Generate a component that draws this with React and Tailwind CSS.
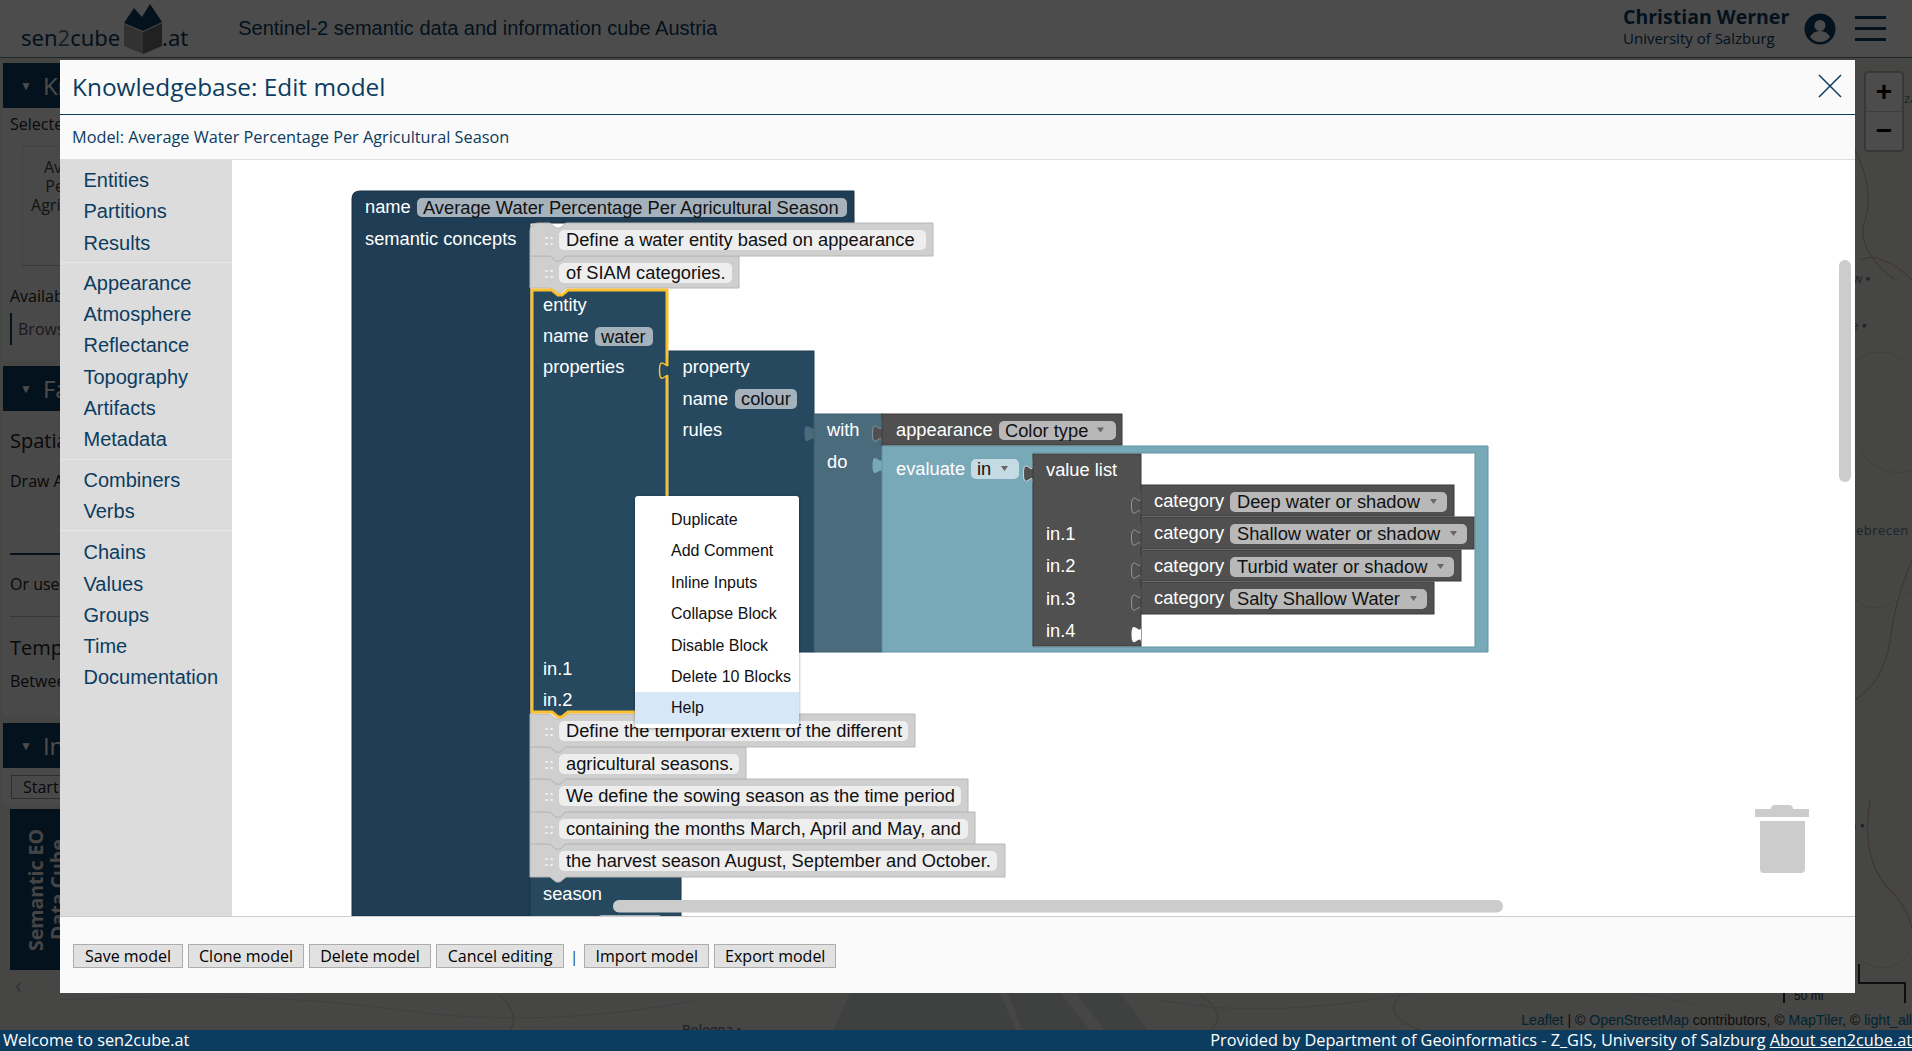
import React from "react";

const NOTCH_A = 20;
const stmtPath = (x, y, r, b, opts = {}) => {
  const n = x + NOTCH_A;
  const top = opts.round
    ? `M${x},${y + 8} q0,-8 8,-8 H${n} l6,5 h4 l6,-5 H${r}`
    : `M${x},${y} H${n} l6,5 h4 l6,-5 H${r}`;
  return `${top} V${b} H${n + 16} l-6,5 h-4 l-6,-5 H${x} Z`;
};

const tabPath = (x, y) => `M${x},${y} v6 c0,11.5 -9.5,-9.2 -9.5,8.6 s9.5,-2.9 9.5,8.6`;

const T = ({ x, c, children, fill = "#fff" }) => (
  <text x={x} y={c + 6.2} fill={fill}>
    {children}
  </text>
);

const Field = ({ x1, x2, y1, y2, fill, tx, text, arrow, color = "#111" }) => (
  <g>
    <rect x={x1} y={y1} width={x2 - x1} height={y2 - y1} rx="5" fill={fill} />
    <T x={tx} c={(y1 + y2) / 2} fill={color}>
      {text}
    </T>
    {arrow && <path d={`M${arrow - 3},${(y1 + y2) / 2 - 3} h7 l-3.5,5 z`} fill="#666" />}
  </g>
);

const Comment = ({ y, b, r, fr, text, round }) => (
  <g>
    <path d={stmtPath(530, y, r, b, { round })} fill="#cfcfcf" stroke="#b7b7b7" strokeWidth="1" />
    <text x="544" y={y + 22} fill="#f2f2f2" fontSize="15" fontWeight="700">
      ::
    </text>
    <rect x="559" y={y + 7} width={fr - 559} height="20" rx="5" fill="#eeeeee" />
    <T x="566" c={y + 17} fill="#111">
      {text}
    </T>
  </g>
);

const Category = ({ y, b, r, fr, text, arrow }) => (
  <g>
    <path d={tabPath(1141, y + 6)} fill="#505050" stroke="#9a9a9a" strokeWidth="1" />
    <rect x="1141" y={y} width={r - 1141} height={b - y} fill="#505050" stroke="#3a3a3a" />
    <T x="1154" c={y + 16}>
      category
    </T>
    <Field x1={1230} x2={fr} y1={y + 7} y2={y + 27} fill="#b8b8b8" tx={1237} text={text} arrow={arrow} />
  </g>
);

function Workspace() {
  return (
    <svg
      viewBox="232 160 1623 756"
      width="1623"
      height="756"
      className="block font-['Liberation_Sans',Arial,sans-serif] text-[18.3px]"
    >
      <path d="M352,199 q0,-8 8,-8 H854 V223 H530 V916 H352 Z" fill="#1f3d54" stroke="#18303f" strokeWidth="1" />
      <T x={365} c={207}>name</T>
      <Field x1={417} x2={847} y1={198} y2={217} fill="#a5b1bb" tx={423} text="Average Water Percentage Per Agricultural Season" />
      <T x={365} c={239}>semantic concepts</T>

      <path d={stmtPath(530, 877, 681, 930)} fill="#26495f" stroke="#1b3648" />
      <T x={543} c={894}>season</T>
      <rect x="597" y="915" width="66" height="20" rx="5" fill="#a5b1bb" />

      <Comment y={844} b={877} r={1005} fr={997} text="the harvest season August, September and October." />
      <Comment y={812} b={844} r={975} fr={968} text="containing the months March, April and May, and" />
      <Comment y={779} b={812} r={968} fr={961} text="We define the sowing season as the time period" />
      <Comment y={747} b={779} r={746} fr={739} text="agricultural seasons." />
      <Comment y={714} b={747} r={915} fr={908} text="Define the temporal extent of the different" />

      <Comment y={256} b={288} r={739} fr={732} text="of SIAM categories." />
      <Comment y={223} b={256} r={933} fr={926} text="Define a water entity based on appearance" round />

      <path d={stmtPath(532, 290, 667, 712)} fill="#26495f" stroke="#f9c132" strokeWidth="3" />
      <T x={543} c={305}>entity</T>
      <T x={543} c={336}>name</T>
      <Field x1={595} x2={653} y1={327} y2={346} fill="#a5b1bb" tx={601} text="water" />
      <T x={543} c={367}>properties</T>
      <T x={543} c={669}>in.1</T>
      <T x={543} c={700}>in.2</T>

      <path d={tabPath(669, 356)} fill="#26495f" stroke="#f9c132" strokeWidth="1.5" />
      <rect x="669" y="351" width="145" height="301" fill="#26495f" stroke="#1f3d52" />
      <T x={682.5} c={367}>property</T>
      <T x={682.5} c={399}>name</T>
      <Field x1={735} x2={797} y1={389} y2={409} fill="#a5b1bb" tx={741} text="colour" />
      <T x={682.5} c={430}>rules</T>

      <path d={tabPath(814, 419)} fill="#4a6b7b" />
      <rect x="814" y="414" width="68" height="238" fill="#4a6b7b" stroke="#3f5d6c" />
      <T x={827} c={430}>with</T>
      <T x={827} c={462}>do</T>

      <path d={tabPath(882, 451)} fill="#78a9b8" />
      <path d="M882,446 H1488 V652 H882 Z M1033,453 V647 H1475 V453 Z" fillRule="evenodd" fill="#78a9b8" stroke="#5f93a4" />
      <T x={896} c={469}>evaluate</T>
      <Field x1={971} x2={1019} y1={459} y2={479} fill="#c5dbe3" tx={977} text="in" arrow={1004} />

      <path d={tabPath(882, 419)} fill="#505050" stroke="#8c9aa3" />
      <rect x="882" y="414" width="240" height="31" fill="#505050" stroke="#3a3a3a" />
      <T x={896} c={430}>appearance</T>
      <Field x1={999} x2={1116} y1={421} y2={440} fill="#b8b8b8" tx={1005} text="Color type" arrow={1100} />

      <path d={tabPath(1033, 459)} fill="#505050" stroke="#d3e3e8" />
      <rect x="1033" y="454" width="108" height="192" fill="#505050" stroke="#3a3a3a" />
      <T x={1046} c={470}>value list</T>
      <T x={1046} c={534}>in.1</T>
      <T x={1046} c={566}>in.2</T>
      <T x={1046} c={599}>in.3</T>
      <T x={1046} c={631}>in.4</T>
      <path d={tabPath(1141, 620)} fill="#fff" />

      <Category y={485} b={516} r={1454} fr={1447} arrow={1433} text="Deep water or shadow" />
      <Category y={517} b={549} r={1474} fr={1467} arrow={1453} text="Shallow water or shadow" />
      <Category y={550} b={581} r={1461} fr={1454} arrow={1440} text="Turbid water or shadow" />
      <Category y={582} b={614} r={1434} fr={1427} arrow={1413} text="Salty Shallow Water" />

      <rect x="1839" y="260" width="12" height="222" rx="6" fill="#cccccc" />
      <rect x="613" y="900" width="890" height="12.5" rx="6" fill="#cccccc" />

      <path d="M1771,809 q0,-4 4,-4 h14 q4,0 4,4 h16 v8 h-54 v-8 z" fill="#cccccc" />
      <path d="M1760,821 h45 v48 q0,4 -4,4 h-37 q-4,0 -4,-4 z" fill="#cccccc" />
    </svg>
  );
}

const menuItems = ["Duplicate", "Add Comment", "Inline Inputs", "Collapse Block", "Disable Block", "Delete 10 Blocks", "Help"];

function ContextMenu() {
  return (
    <div className="absolute left-[403px] top-[336px] w-[164px] rounded-[3px] bg-white pt-[8px] pb-[4px] shadow-[0_1px_3px_rgba(0,0,0,0.4)] font-['Liberation_Sans',Arial,sans-serif] text-[16px] text-[#111]">
      {menuItems.map((m) => (
        <div key={m} className={`h-[31.4px] pl-[36px] leading-[31.4px] whitespace-nowrap ${m === "Help" ? "bg-[#d6e8f7]" : ""}`}>
          {m}
        </div>
      ))}
    </div>
  );
}

const sideGroups = [
  ["Entities", "Partitions", "Results"],
  ["Appearance", "Atmosphere", "Reflectance", "Topography", "Artifacts", "Metadata"],
  ["Combiners", "Verbs"],
  ["Chains", "Values", "Groups", "Time", "Documentation"],
];

function Sidebar() {
  return (
    <div className="w-[172px] shrink-0 bg-[#dcdcdc] font-['Liberation_Sans',Arial,sans-serif] text-[20px] leading-[31.3px] text-[#0c3c60]">
      {sideGroups.map((g, i) => (
        <div key={i} className="border-b border-[#e8e8e8] pt-[5px] pb-[3px] pl-[23.5px] last:border-b-0 last:pt-[6px]">
          {g.map((s) => (
            <div key={s}>{s}</div>
          ))}
        </div>
      ))}
    </div>
  );
}

const Btn = ({ children, className }) => (
  <button className={`h-[24px] border border-[#adadad] bg-[#e1e1e1] text-[16px] leading-[22px] text-black ${className}`}>{children}</button>
);

function Modal() {
  return (
    <div className="absolute left-[60px] top-[60px] z-20 flex h-[933px] w-[1795px] flex-col bg-[#fafafa] font-['Open_Sans',sans-serif] text-[#0c3c60]">
      <div className="flex h-[55px] shrink-0 items-center justify-between border-b border-[#0c3c60] pl-[12px] pr-[13px]">
        <span className="text-[24.4px] leading-[54px]">Knowledgebase: Edit model</span>
        <svg width="24" height="24" viewBox="0 0 24 24" className="-mt-[2px]">
          <path d="M1 1 L23 23 M23 1 L1 23" stroke="#0c3c60" strokeWidth="1.5" fill="none" />
        </svg>
      </div>
      <div className="flex h-[45px] shrink-0 items-center border-b border-[#dddddd] pl-[12px] text-[16.3px]">
        Model: Average Water Percentage Per Agricultural Season
      </div>
      <div className="flex h-[756px] shrink-0">
        <Sidebar />
        <div className="relative flex-1 overflow-hidden bg-white">
          <Workspace />
          <ContextMenu />
        </div>
      </div>
      <div className="flex flex-1 items-center gap-[5px] border-t border-[#cccccc] pl-[13px] pt-[2px]">
        <Btn className="w-[110px]">Save model</Btn>
        <Btn className="w-[116px]">Clone model</Btn>
        <Btn className="w-[122px]">Delete model</Btn>
        <Btn className="w-[128px]">Cancel editing</Btn>
        <span className="mx-px text-[15px]">|</span>
        <Btn className="w-[125px]">Import model</Btn>
        <Btn className="w-[122px]">Export model</Btn>
      </div>
    </div>
  );
}

function CardHead({ title }) {
  return (
    <div className="flex h-[45px] items-center bg-[#0c3c60] pl-[17px] text-[24px] text-white">
      <span className="mr-[11px] text-[12px]">▼</span>
      {title}
    </div>
  );
}

function LeftPanel() {
  return (
    <div className="relative flex w-[360px] flex-col pl-[3px] pt-[5px] font-['Open_Sans',sans-serif] text-[16px] text-[#222]">
      <div className="h-[297px] bg-[#f5f5f5]">
        <CardHead title="Knowledgebase" />
        <div className="pl-[7px] pt-[4px]">
          <div>Selected model</div>
          <div className="mt-[10px] ml-[12px] h-[120px] w-[104px] border border-[#dedede] border-r-[#bbb] border-b-[#bbb] pt-[11px] text-center leading-[19px] text-[#444]">
            Average
            <br />
            Percent
            <br />
            Agricultural
          </div>
          <div className="mt-[18px]">Available models</div>
          <div className="mt-[5px] h-[32px] border-l-2 border-[#0c3c60] pl-[6px] leading-[32px] text-[#556]">Browse models</div>
        </div>
      </div>
      <div className="mt-[6px] h-[350px] bg-[#f5f5f5]">
        <CardHead title="Factbase" />
        <div className="pl-[7px] pt-[15px]">
          <div className="text-[20px]">Spatial extent</div>
          <div className="mt-[13px]">Draw Area</div>
          <div className="mt-[60px] h-[2px] w-[300px] bg-[#0c3c60]" />
          <div className="mt-[17px]">Or use a preset</div>
          <div className="mt-[20px] h-px w-[300px] bg-[#bbb]" />
          <div className="mt-[16px] text-[20px]">Temporal extent</div>
          <div className="mt-[6px]">Between</div>
        </div>
      </div>
      <div className="mt-[7px] h-[82px] bg-[#f5f5f5]">
        <CardHead title="Inference" />
        <div className="ml-[8px] mt-[7px] h-[24px] w-[120px] border border-[#999] pl-[11px] leading-[22px]">Start</div>
      </div>
      <div className="ml-[7px] mt-[4px] flex h-[161px] w-[120px] items-center justify-start bg-[#0c3c60] pl-[15px]">
        <div className="rotate-180 whitespace-nowrap text-center text-[19.5px] leading-[22px] font-bold text-[#e8e8e8] [writing-mode:vertical-rl]">
          Semantic EO
          <br />
          Data Cube
        </div>
      </div>
      <div className="ml-[12px] mt-[2px] text-[22px] text-[#aaa] leading-[24px]">‹</div>
    </div>
  );
}

function MapBg() {
  return (
    <svg className="absolute inset-0 h-full w-full" viewBox="0 58 1912 972" preserveAspectRatio="none">
      <rect x="0" y="58" width="1912" height="972" fill="#e9e9e7" />
      <path d="M833,1030 L850,993 L1120,993 L1148,1030 Z" fill="#d2d5d8" />
      <path d="M1060,993 l30,37 h14 l-28,-37 z M1000,993 l16,37 h6 l-14,-37 z" fill="#e9e9e7" />
      <path d="M1855,150 q20,40 10,70 t30,60 M1860,260 q20,-10 52,20 M1855,700 q30,-20 35,-60 t22,-80 M1870,800 q-10,60 20,90 t22,70" stroke="#e0b0a8" fill="none" strokeWidth="1.2" />
      <path d="M1856,360 q30,-20 56,10 M1860,450 q20,30 52,20 M1856,600 q20,20 56,-10 M1860,960 q30,20 52,-10 M60,1000 q200,-10 340,10 t300,-10 M1160,1000 q100,20 240,-5 t300,10" stroke="#d3d3d3" fill="none" strokeWidth="1" />
      <path d="M500,995 q20,20 10,35 M1400,995 q-20,20 20,35 M1200,995 q30,20 10,35" stroke="#e0b0a8" fill="none" strokeWidth="1" />
      <g fontFamily="'Open Sans',sans-serif" fontSize="13" fill="#6a7b88">
        <text x="1845" y="283">aw ▪</text>
        <text x="1845" y="330">ce ▪</text>
        <text x="1846" y="535" letterSpacing="0.5">Debrecen ▪</text>
        <text x="1846" y="830">ja ▪</text>
        <text x="1904" y="103">za</text>
        <text x="682" y="1034" fontWeight="600">Bologna ▪</text>
      </g>
      <g stroke="#333" fill="none" strokeWidth="2">
        <path d="M1859,964 V983 H1905 V1003 M1784,993 V1003" />
      </g>
      <text x="1794" y="1000" fontSize="12" fill="#333" fontFamily="'Liberation Sans',sans-serif">50 mi</text>
    </svg>
  );
}

export default function App() {
  return (
    <div className="relative flex h-[1051px] w-[1912px] flex-col overflow-hidden bg-white font-['Open_Sans',sans-serif]">
      <header className="flex h-[58px] shrink-0 items-center border-b border-[#6b7c88] bg-white pl-[21px] pr-[26px]">
        <span className="mt-[16px] w-[99px] whitespace-nowrap text-[22px] leading-[30px] font-['Noto_Sans',sans-serif] text-[#0c3c60]">
          sen<span className="text-[#4a7290]">2</span>cube
        </span>
        <svg width="40" height="52" viewBox="0 0 40 52" className="ml-[3px]">
          <path d="M1,20 L11,5 L19,14 L27,1 L39,19 L20,28 Z" fill="#0c3c60" />
          <path d="M1,21 L20,29 V51 L1,43 Z" fill="#a8a8a8" />
          <path d="M20,29 L39,20 V43 L20,51 Z" fill="#707070" />
        </svg>
        <span className="mt-[16px] -ml-[1px] text-[22px] leading-[30px] font-['Noto_Sans',sans-serif] text-[#0c3c60]">.at</span>
        <span className="ml-[50px] -mt-[1px] text-[20px] font-['Liberation_Sans',sans-serif] text-[#0c3c60]">Sentinel-2 semantic data and information cube Austria</span>
        <div className="ml-auto flex items-center">
          <div className="-mt-[4px] mr-[15px] w-[166px]">
            <div className="text-[19.5px] leading-[22px] font-bold whitespace-nowrap text-[#0c3c60]">Christian Werner</div>
            <div className="text-[15px] leading-[20px] whitespace-nowrap text-[#0c3c60]">University of Salzburg</div>
          </div>
          <svg width="32" height="32" viewBox="0 0 32 32">
            <circle cx="16" cy="16" r="15.5" fill="#0c3c60" />
            <circle cx="16" cy="12.5" r="5.5" fill="#fff" />
            <path d="M6,24 q3,-6 10,-6 q7,0 10,6 q-4,5 -10,5 q-6,0 -10,-5 z" fill="#fff" />
          </svg>
          <div className="ml-[19px] flex w-[31px] flex-col gap-[8px]">
            <div className="h-[3px] bg-[#0c3c60]" />
            <div className="h-[3px] bg-[#0c3c60]" />
            <div className="h-[3px] bg-[#0c3c60]" />
          </div>
        </div>
      </header>

      <main className="relative flex-1 overflow-hidden">
        <MapBg />
        <LeftPanel />
        <div className="absolute left-[1864px] top-[13px] w-[40px] rounded-[4px] border-2 border-[#bbb] bg-white text-center font-['Liberation_Sans',sans-serif] text-[28px] leading-[38px] font-bold text-black">
          <div className="border-b border-[#ccc]">+</div>
          <div>−</div>
        </div>
        <div className="absolute right-0 bottom-0 pl-[5px] font-['Liberation_Sans',sans-serif] text-[14.1px] leading-[20px] text-[#333]">
          <span className="text-[#0078a8]">Leaflet</span> | © <span className="text-[#0078a8]">OpenStreetMap</span> contributors, © <span className="text-[#0078a8]">MapTiler</span>, © <span className="text-[#0078a8]">light_all</span>
        </div>
      </main>

      <div className="absolute inset-x-0 top-0 bottom-[21px] z-10 bg-black/70" />
      <Modal />

      <footer className="relative z-20 flex h-[21px] shrink-0 items-center justify-between bg-[#0c3c60] pl-[3px] text-[16.3px] leading-[21px] text-white">
        <span>Welcome to sen2cube.at</span>
        <span>
          Provided by Department of Geoinformatics - Z_GIS, University of Salzburg <span className="underline">About sen2cube.at</span>
        </span>
      </footer>
    </div>
  );
}
